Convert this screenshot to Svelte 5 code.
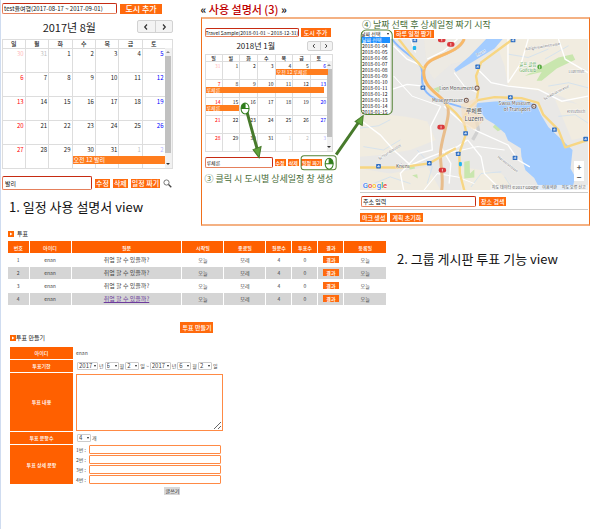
<script>
  const names = ['일', '월', '화', '수', '목', '금', '토'];

  function weeks(lead, total, count) {
    const days = [
      ...lead.map((n) => ({ n, out: true })),
      ...Array.from({ length: total }, (_, i) => ({ n: i + 1, out: false }))
    ];
    let next = 1;
    while (days.length < count * 7) days.push({ n: next++, out: true });
    return Array.from({ length: count }, (_, i) => days.slice(i * 7, i * 7 + 7));
  }

  const august = weeks([30, 31], 31, 5);
  const january = weeks([31], 31, 5);
  const augustEvents = [{ row: 4, col: 3, span: 4, label: '오전 12 발리' }];
  const januaryEvents = [
    { row: 0, col: 4, span: 3, label: '오전 12 루체른' },
    { row: 1, col: 0, span: 7, label: '루체른' },
    { row: 2, col: 0, span: 2, label: '루체른' }
  ];
  const dates = Array.from({ length: 12 }, (_, i) => '2018-01-' + String(i + 4).padStart(2, '0'));
  const voteHead = ['번호', '아이디', '질문', '시작일', '종료일', '질문수', '투표수', '결과', '등록일'];
  const votes = [1, 2, 3, 4];
  const shields = [[163, 3], [455, 3], [350, 82], [187, 144], [447, 173], [578, 269], [671, 297], [314, 280], [292, 341], [461, 353], [55, 378], [206, 369]];
  const highways = [[243, 3], [270, 16], [241, 262], [245, 390]];
</script>

{#snippet calendar(title, rows, events, small)}
  <div class="cal" class:small>
    <div class="cal-bar">
      <h2>{title}</h2>
      <div class="nav">
        <button aria-label="이전 달"><svg viewBox="0 0 8 8"><path d="M5 1.5 2.7 4 5 6.5" /></svg></button>
        <button aria-label="다음 달"><svg viewBox="0 0 8 8"><path d="M3 1.5 5.3 4 3 6.5" /></svg></button>
      </div>
    </div>
    <div class="cal-body">
      <table>
        <thead><tr>{#each names as n}<th>{n}</th>{/each}</tr></thead>
        <tbody>
          {#each rows as week, r}
            <tr>
              {#each week as day, c}
                <td class:sun={c === 0} class:sat={c === 6} class:out={day.out}>
                  <span>{day.n}</span>
                  {#each events.filter((e) => e.row === r && e.col === c) as e}
                    <div class="event" style="width: calc({e.span * 100}% + {e.span - 1}px)">{e.label}</div>
                  {/each}
                </td>
              {/each}
            </tr>
          {/each}
        </tbody>
      </table>
      <div class="scroll"><i class="up"></i><b></b><i class="down"></i></div>
    </div>
  </div>
{/snippet}

{#snippet drop(value, label, cls)}
  <span class="drop {cls}"><select aria-label={label}><option>{value}</option></select></span>
{/snippet}

{#snippet mouse(x, y, right)}
  <g transform="translate({x} {y})">
    <ellipse rx="4" ry="5.5" fill="#fff" stroke="#2f7d1b" />
    <path d={right ? 'M0 -5.5A4 5.5 0 0 1 4 0H0z' : 'M0 -5.5A4 5.5 0 0 0 -4 0H0z'} fill="#2f7d1b" />
    <path d="M-4 0H4M0 -5.5V0" stroke="#2f7d1b" />
  </g>
{/snippet}

<main>
  <div class="top">
    <section class="trip">
      <div class="line">
        <input class="field name" aria-label="여행 이름" value="test율여행(2017-08-17 ~ 2017-09-01)" />
        <button class="btn add">도시 추가</button>
      </div>
      {@render calendar('2017년 8월', august, augustEvents, false)}
      <div class="line edit">
        <input class="field city" aria-label="도시" value="발리" />
        <button class="btn">수정</button>
        <button class="btn">삭제</button>
        <button class="btn">일정 짜기</button>
        <svg class="lens" viewBox="0 0 9 9"><circle cx="3.5" cy="3.5" r="2.6" fill="#fff" stroke="#777" /><path d="M5.5 5.5 8.3 8.3" stroke="#444" stroke-width="1.3" /></svg>
      </div>
      <p class="caption">1. 일정 사용 설명서 view</p>
    </section>

    <section class="guide">
      <h1><b>«</b> 사용 설명서 (3) <b>»</b></h1>
      <div class="box">
        <div class="month">
          <div class="line">
            <input class="field name" aria-label="여행 이름" value="Travel Sample(2018-01-01 ~ 2018-12-31)" />
            <button class="btn add">도시 추가</button>
          </div>
          {@render calendar('2018년 1월', january, januaryEvents, true)}
          <div class="line edit">
            <input class="field city" aria-label="도시" value="루체른" />
            <button class="btn">수정</button>
            <button class="btn">삭제</button>
            <button class="btn">일정 짜기</button>
          </div>
          <p class="step">③ 클릭 시 도시별 상세일정 창 생성</p>
        </div>

        <div class="plan">
          <p class="step">④ 날짜 선택 후 상세일정 짜기 시작</p>
          <div class="picker">
            <div class="line">
              {@render drop('날짜 선택', '날짜 선택', 'date')}
              <button class="btn">하루 일정 짱기</button>
            </div>
            <ul>
              <li class="on">날짜 선택</li>
              {#each dates as d}<li>{d}</li>{/each}
            </ul>
          </div>
          <div class="map">
            <svg viewBox="0 0 678 450">
              <rect width="678" height="450" fill="#e9e8e6" />
              <g fill="#f1ece0">
                <path d="M0 230C60 220 130 225 200 245L225 300 150 330 60 345 0 350z" />
                <path d="M400 0H678V210C640 190 600 165 540 155L440 140 430 80z" />
                <path d="M0 385 90 400 200 380 240 450H0zM300 380 420 400 470 450H300zM580 180 678 200V290L630 300z" />
                <path d="M190 0H400L330 60 270 75 220 120 200 90z" opacity=".5" />
              </g>
              <path d="M490 110 590 55 632 45 640 62 585 88 540 124 525 124 540 98z" fill="#c9e6ae" />
              <path d="M310 365 326 362 327 400 340 388V412L310 415zM395 262 405 250 430 264 410 274zM218 148 240 140 235 160zM140 376 158 370 164 385 148 388zM155 405 170 402 172 415z" fill="#c9e6ae" />
              <path d="M375 0H424L400 28 285 98 280 90 325 52z" fill="#a3ccff" />
              <path d="M338 205 350 190 400 186 480 183 524 194 538 225 560 262 602 302 632 330 626 385 640 410 630 450H537L518 413 492 390 480 350 478 325 440 302 431 280 398 252 374 238 360 218z" fill="#a3ccff" />
              <path d="M95 0C130 50 190 60 185 105S200 175 260 190L338 213" fill="none" stroke="#8dbcff" stroke-width="6" />
              <g fill="none" stroke="#bcd9fa" stroke-width="1.5">
                <path d="M0 265 55 258 90 240M10 320 70 330 120 300M40 430 90 410 150 430M440 45 500 55 560 30M560 140 620 130 678 145M330 440 360 400 420 395M550 60 620 20M590 230 640 225 678 250M170 330 215 380 200 430M450 440 430 410" />
              </g>
              <path d="M345 235 352 270 335 300" fill="none" stroke="#d0d0d0" stroke-width="10" />
              <g fill="none" stroke="#fff" stroke-width="4">
                <path d="M0 240 60 285 100 330 150 375 210 350 290 320 320 300M250 200 300 245 350 275 440 315 470 360 505 380" />
                <path d="M100 20 140 60 185 80M95 150 140 135 190 140M200 60 250 35 290 0M350 90 390 130 440 140 530 150 600 185 678 170" />
                <path d="M440 0V130M500 0 480 70 440 130M590 0 610 60 678 100M240 200 210 260 215 330 175 340 120 400 130 450M320 300 360 350 370 400 420 450M240 320 270 370 265 430" />
                <path d="M280 100 310 140 350 160M100 110 155 170 240 200M260 340 350 320 430 330M190 450 230 400 290 410 340 430M150 0 165 40" stroke-width="3" />
              </g>
              <g fill="none" stroke-linejoin="round">
                <path d="M310 0C285 55 195 45 190 95S240 165 258 195 236 300 239 350 248 410 243 450" stroke="#e8bd8c" stroke-width="9" />
                <path d="M310 0C285 55 195 45 190 95S240 165 258 195" stroke="#f9b967" stroke-width="7" />
                <path d="M115 0 150 45 190 90M455 0 360 70 345 110 352 150 347 180M258 195 285 220 310 250 316 280 295 340 297 400 310 450M308 235 325 205 350 182 400 173 480 176 530 190 545 225 590 270 610 322 678 300M0 382H120L205 370 285 325" stroke="#f7d683" stroke-width="7" />
              </g>
              <path d="M300 195 350 175 345 215 370 240 340 270 305 255z" fill="#f5dfc0" opacity=".7" />
              {#each shields as [x, y]}
                <g transform="translate({x} {y})"><rect x="-7" y="-6" width="14" height="13" rx="2" fill="#2f6fc4" /><path d="M-3 3 1 -3V4M-4 1H4" fill="none" stroke="#fff" stroke-width="1.5" /></g>
              {/each}
              {#each highways as [x, y]}
                <g transform="translate({x} {y})"><rect x="-11" y="-7" width="22" height="14" rx="6" fill="#d9383c" /><path d="M0 -4V4" stroke="#fff" stroke-width="2" /></g>
              {/each}
              <rect x="157" y="21" width="10" height="12" rx="3" fill="#22b5ee" /><rect x="294" y="366" width="9" height="12" rx="3" fill="#22b5ee" />
              {#each [[348, 146], [316, 182], [517, 200]] as [x, y]}
                <circle cx={x} cy={y} r="6" fill="#fff" stroke="#76584d" stroke-width="3" /><circle cx={x} cy={y} r="2" fill="#76584d" />
              {/each}
              <circle cx="534" cy="83" r="7" fill="#55a83c" /><path d="M534 79V88" stroke="#fff" stroke-width="2" />
              <g class="labels">
                <text x="338" y="151" text-anchor="end">Lion Monument</text>
                <text x="306" y="187" text-anchor="end">Museggmauer</text>
                <text x="507" y="195" text-anchor="end">Swiss Museum</text>
                <text x="507" y="214" text-anchor="end">of Transport</text>
                <text x="107" y="383">Kriens</text>
                <text x="339" y="219" text-anchor="middle" class="town">루체른</text>
                <text x="339" y="243" text-anchor="middle" class="town">Luzern</text>
                <text x="524" y="79" text-anchor="end" class="golf">골프 클럽</text>
                <text x="524" y="97" text-anchor="end" class="golf">Golfclub</text>
                <text class="road river" transform="translate(348 52) rotate(-30)">Reuss</text>
                <text class="road" transform="translate(492 34) rotate(-9)">Adligenswilerstrasse</text>
                <text class="road" transform="translate(548 182) rotate(-28)">Schädrütistrasse</text>
                <text class="road" transform="translate(58 360) rotate(-33)">Schlundstrasse</text>
                <text class="road" transform="translate(408 352) rotate(38)">Horwerstrasse</text>
                <text class="road" x="670" y="100" text-anchor="end">Luzernstr.</text>
                <text class="road" x="670" y="219" text-anchor="end">Kreuzbuch</text>
              </g>
              <rect x="388" y="434" width="290" height="16" fill="#f5f5f5" opacity=".8" />
              <g class="legal"><text x="392" y="446">지도 데이터 ©2017 Google</text><text x="542" y="446">이용약관</text><text x="600" y="446">지도 오류 신고</text></g>
              <text x="8" y="442" class="google"><tspan fill="#4285f4">G</tspan><tspan fill="#ea4335">o</tspan><tspan fill="#fbbc05">o</tspan><tspan fill="#4285f4">g</tspan><tspan fill="#34a853">l</tspan><tspan fill="#ea4335">e</tspan></text>
            </svg>
            <div class="zoom"><button aria-label="확대">+</button><button aria-label="축소">−</button></div>
          </div>
          <div class="line search">
            <input class="field" aria-label="주소" value="주소 입력" />
            <button class="btn">장소 검색</button>
          </div>
          <div class="line tools">
            <button class="btn">마크 생성</button>
            <button class="btn">계획 초기화</button>
          </div>
        </div>

        <svg class="marks" viewBox="0 0 389 208" preserveAspectRatio="none">
          <g fill="none" stroke="#548235"><rect x="100" y="138" width="35" height="14" rx="3" /><rect x="160" y="13" width="31" height="84" rx="5" /></g>
          <g stroke="#477a2b" stroke-width="3" fill="#5fa33a">
            <path d="M46 95 56 131M135 137 158 104" />
            <path d="M52 132 60 129 58 140zM154 104 161 108 162 98z" stroke-width="1" />
          </g>
          {@render mouse(44, 91, false)}
          {@render mouse(128, 146, true)}
        </svg>
      </div>
    </section>
  </div>

  <div class="bottom">
    <section class="board">
      <h3><svg viewBox="0 0 6 6"><rect width="6" height="6" fill="#f60" /><path d="M2 1.5 4.5 3 2 4.5z" fill="#fff" /></svg>투표</h3>
      <table class="votes">
        <colgroup><col class="c1" /><col class="c2" /><col class="c3" /><col class="c4" /><col class="c4" /><col class="c6" /><col class="c6" /><col class="c6" /><col class="c4" /></colgroup>
        <thead><tr>{#each voteHead as h}<th>{h}</th>{/each}</tr></thead>
        <tbody>
          {#each votes as n}
            <tr>
              <td>{n}</td><td>enan</td>
              <td><a href="#vote" class:seen={n === 4}>취업 할 수 있을까?</a></td>
              <td>오늘</td><td>모레</td><td>4</td><td>0</td>
              <td><button class="btn">결과</button></td>
              <td>오늘</td>
            </tr>
          {/each}
        </tbody>
      </table>
      <div class="make"><button class="btn">투표 만들기</button></div>

      <h3 class="second"><svg viewBox="0 0 6 6"><rect width="6" height="6" fill="#f60" /><path d="M2 1.5 4.5 3 2 4.5z" fill="#fff" /></svg>투표 만들기</h3>
      <form>
        <div class="row"><div class="key">아이디</div><div class="val">enan</div></div>
        <div class="row">
          <div class="key">투표기한</div>
          <div class="val dates">
            {@render drop('2017', '시작 년', 'year')}년 {@render drop('6', '시작 월', 'part')}월 {@render drop('2', '시작 일', 'part')}일 ~
            {@render drop('2017', '종료 년', 'year')}년 {@render drop('6', '종료 월', 'part')}월 {@render drop('2', '종료 일', 'part')}일
          </div>
        </div>
        <div class="row tall"><label class="key" for="body">투표 내용</label><div class="val"><textarea id="body"></textarea></div></div>
        <div class="row"><div class="key">투표 문항수</div><div class="val dates">{@render drop('4', '투표 문항수', 'part')}개</div></div>
        <div class="row">
          <div class="key">투표 상세 문항</div>
          <div class="val items">
            {#each votes as n}<label><span>{n}번 :</span><input /></label>{/each}
          </div>
        </div>
        <div class="submit"><button type="button">글쓰기</button></div>
      </form>
    </section>
    <p class="caption">2. 그룹 게시판 투표 기능 view</p>
  </div>
</main>

<style>
  :global(body) { background: #fff; }
  main {
    --orange: #ff6a0d;
    box-sizing: border-box;
    min-height: 100vh;
    padding-left: 1px;
    border-left: 1px solid #cfdcf0;
    font: 6px/8px "Noto Sans CJK KR", "Noto Sans", sans-serif;
    color: #222;
  }
  main :global(*) { box-sizing: border-box; }
  button, input, select, textarea { font: inherit; color: inherit; margin: 0; padding: 0; border: 0; border-radius: 0; min-width: 0; }
  h1, h2, h3, p, ul { margin: 0; padding: 0; font-weight: 400; }
  a { color: inherit; text-decoration: none; }
  .line { display: flex; align-items: center; gap: 3px; }
  .btn { background: var(--orange); color: #fff; white-space: nowrap; padding: 0 2px; font-weight: 500; }
  .field { border: 1px solid #e5805c; border-top-color: #c62b12; border-right-color: #c62b12; border-radius: 2px; background: #fff; padding: 0 1px; color: #111; }
  .caption { font-size: 13px; line-height: 18px; color: #111; white-space: nowrap; }

  .top { display: grid; grid-template-columns: 29% 1fr; column-gap: 28px; padding-right: 4px; height: 227px; }
  .trip { padding-top: 3px; }
  .trip .name { flex: 0 0 115px; height: 11px; }
  .trip .add { width: 42px; height: 10px; font-size: 8px; line-height: 10px; }
  .trip .city { flex: 0 0 90px; height: 14px; padding: 0 2px; }
  .edit { padding-top: 7px; }
  .trip .edit .btn { height: 9px; font-size: 7px; line-height: 9px; padding: 0 1px; }
  .lens { width: 9px; height: 9px; }
  .trip .caption { padding: 8px 0 0 7px; }

  .cal-bar { display: grid; grid-template-columns: 1fr auto; align-items: center; height: 25px; }
  .cal h2 { font-size: 11px; line-height: 14px; text-align: center; }
  .nav { display: flex; height: 13px; border: 1px solid #d2d2d2; border-radius: 2px; background: #f3f3f3; }
  .nav button { width: 17px; display: grid; place-items: center; background: none; }
  .nav button + button { border-left: 1px solid #d2d2d2; }
  .nav svg { width: 8px; height: 8px; fill: none; stroke: #333; stroke-width: 1.2; }
  .cal-body { display: flex; border: 1px solid #ddd; }
  .cal table { flex: 1; table-layout: fixed; border-collapse: collapse; }
  .cal th { height: 8px; padding: 0; font-size: 6px; line-height: 7px; font-weight: 500; border-bottom: 1px solid #ddd; }
  .cal th + th { border-left: 1px solid #ddd; }
  .cal td { position: relative; height: 24px; padding: 1px 1px 0 0; text-align: right; vertical-align: top; line-height: 7px; }
  .cal td + td { border-left: 1px solid #ddd; }
  .cal tr + tr td { border-top: 1px solid #ddd; }
  .cal td.sun { color: #f00; }
  .cal td.sat { color: #00f; }
  .cal td.out > span { opacity: .3; }
  .cal .event { position: absolute; z-index: 1; left: 0; bottom: 4px; height: 8px; padding-left: 1px; background: #ff7d1e; color: #fff; font-size: 6px; line-height: 8px; text-align: left; white-space: nowrap; }
  .scroll { width: 7px; margin-top: 8px; display: flex; flex-direction: column; align-items: center; justify-content: space-between; background: #f1f1f1; }
  .scroll b { flex: 0 0 81%; width: 6px; margin-bottom: auto; background: #c1c1c1; }
  .scroll i { width: 0; height: 0; margin: 3px 0; border: 2px solid transparent; border-top: 0; border-bottom-color: #888; }
  .scroll .down { border-top: 2px solid #333; border-bottom: 0; }

  .guide { padding-top: 2px; }
  .guide h1 { font-size: 11px; line-height: 15px; color: #c00000; font-weight: 500; }
  .guide h1 b { color: #111; }
  .guide .box { position: relative; display: grid; grid-template-columns: 33.5% 1fr; column-gap: 27px; height: 209px; border: 1px solid #f0701c; border-width: 2px 1px; border-color: #f4b183 #f0701c; padding: 0 1px 0 3px; }
  .month { padding-top: 9px; }
  .month .line { gap: 2px; }
  .month .name { flex: 0 0 94px; height: 9px; padding: 0; font-size: 5px; }
  .month .add { width: 30px; height: 9px; font-size: 6px; line-height: 9px; }
  .month .city { flex: 0 0 68px; height: 11px; font-size: 5px; }
  .month .edit { padding-top: 5px; }
  .month .edit .btn { height: 7px; font-size: 5px; line-height: 7px; padding: 0 1px; }
  .small .cal-bar { height: 17px; }
  .small h2 { font-size: 8px; line-height: 10px; }
  .small .nav { height: 10px; }
  .small .nav button { width: 12px; }
  .small .nav svg { width: 6px; height: 6px; }
  .small .cal-body { font-size: 5px; }
  .small th { height: 6px; font-size: 5px; line-height: 5px; }
  .small td { height: 18px; line-height: 5px; }
  .small .event { height: 6px; bottom: 4px; font-size: 5px; line-height: 6px; }
  .small .scroll { width: 5px; margin-top: 6px; }
  .small .scroll b { width: 5px; flex-basis: 76%; }
  .step { font-size: 9px; line-height: 11px; color: #466b35; white-space: nowrap; }
  .month .step { padding-top: 5px; }

  .plan .step { padding-left: 2px; }
  .picker { position: relative; height: 9px; }
  .picker .btn { height: 8px; line-height: 8px; }
  .picker ul { position: absolute; z-index: 2; top: 7px; left: 1px; width: 29px; list-style: none; background: #fff; border-radius: 0 0 4px 4px; font-size: 5px; line-height: 6px; color: #111; }
  .picker li { padding-left: 1px; }
  .picker .on { background: #1e90ff; color: #fff; }
  .drop { position: relative; display: inline-flex; }
  .drop select { appearance: none; width: 100%; height: 8px; border: 1px solid #ccc; border-radius: 1px; background: #fff; padding-left: 1px; font-size: 6px; line-height: 6px; }
  .drop::after { content: ""; position: absolute; right: 2px; top: 3px; border: 1px solid transparent; border-top: 2px solid #222; pointer-events: none; }
  .drop.date { width: 31px; }
  .drop.date select { border: 0; font-size: 5px; }
  .drop.year { width: 21px; }
  .drop.part { width: 14px; }
  .map { position: relative; }
  .map > svg { display: block; width: 100%; }
  .labels { font-size: 14px; fill: #4a4a4a; stroke: #fff; stroke-width: 2px; paint-order: stroke; }
  .town { font-size: 18px; }
  .golf { font-size: 13px; fill: #4a9a38; }
  .road { font-size: 11px; fill: #777; }
  .river { fill: #5686c2; }
  .legal { font-size: 12px; fill: #555; }
  .google { font: 500 23px Roboto, sans-serif; stroke: #fff; stroke-width: 2px; paint-order: stroke; }
  .zoom { position: absolute; right: 4px; bottom: 9px; width: 10px; display: grid; background: #fff; }
  .zoom button { height: 10px; background: none; font-size: 8px; line-height: 9px; font-weight: 700; color: #555; }
  .search { margin-top: 2px; padding: 3px 1px 2px; border: 1px solid #ccc; border-width: 1px 0; }
  .search .field { flex: 0 0 51%; height: 11px; }
  .search .btn { width: 27px; height: 9px; line-height: 9px; padding: 0; }
  .tools { padding-top: 3px; }
  .tools .btn { height: 9px; line-height: 9px; }
  .marks { position: absolute; z-index: 3; top: -2px; left: -1px; width: calc(100% + 2px); height: calc(100% + 4px); pointer-events: none; }

  .bottom { display: grid; grid-template-columns: 64.5% 1fr; column-gap: 11px; padding-left: 6px; }
  .bottom > .caption { padding-top: 23px; }
  h3 { display: flex; align-items: center; gap: 3px; height: 14px; font-size: 6px; line-height: 8px; }
  h3 svg { width: 6px; height: 6px; }
  .second { padding-left: 2px; gap: 0; height: 10px; }
  .votes { width: 100%; table-layout: fixed; border-collapse: collapse; text-align: center; font-size: 5px; line-height: 7px; }
  .votes th { height: 12px; padding: 0; background: #ff6000; color: #fff; font-weight: 500; }
  .votes td { height: 13px; padding: 0; color: #444; }
  .votes th + th, .votes td + td { border-left: 1px solid #fff; }
  .votes tbody tr:nth-child(even) { background: #d5d5d5; }
  .votes tr + tr td { border-top: 1px solid #fff; }
  .votes .seen { color: #6d3b9c; text-decoration: underline; }
  .votes .btn { display: block; width: 16px; height: 7px; margin: 0 auto; padding: 0; line-height: 7px; }
  .votes a { font-size: 6px; }
  .c1 { width: 21px; } .c2 { width: 42px; } .c4 { width: 42px; } .c6 { width: 26px; }
  .make { display: flex; justify-content: center; padding: 17px 0 0 0; }
  .make .btn { width: 33px; height: 11px; padding: 0; line-height: 11px; }

  form { width: 57%; padding-left: 2px; margin-top: 4px; }
  .row { display: grid; grid-template-columns: 63px 1fr; min-height: 12px; margin-bottom: 1px; }
  .key { display: grid; place-items: center; background: #ff6000; color: #fff; font-size: 5px; font-weight: 500; }
  .val { display: flex; align-items: center; gap: 1px; padding-left: 3px; font-size: 5px; color: #444; white-space: nowrap; }
  .dates { padding-left: 4px; }
  .tall { height: 58px; }
  textarea { width: 100%; height: 57px; border: 1px solid #ff8a45; background: #fff; resize: both; }
  .items { flex-direction: column; align-items: stretch; gap: 1px; }
  .items label { display: flex; align-items: center; gap: 1px; padding-right: 2px; }
  .items span { width: 12px; }
  .items input { flex: 1; height: 9px; border: 1px solid #ff8a45; border-radius: 1px; background: #fff; }
  .submit { display: flex; justify-content: flex-end; padding: 2px 43px 0 0; }
  .submit button { width: 16px; height: 8px; background: #d8d8d8; color: #222; font-size: 5px; line-height: 8px; }
</style>
